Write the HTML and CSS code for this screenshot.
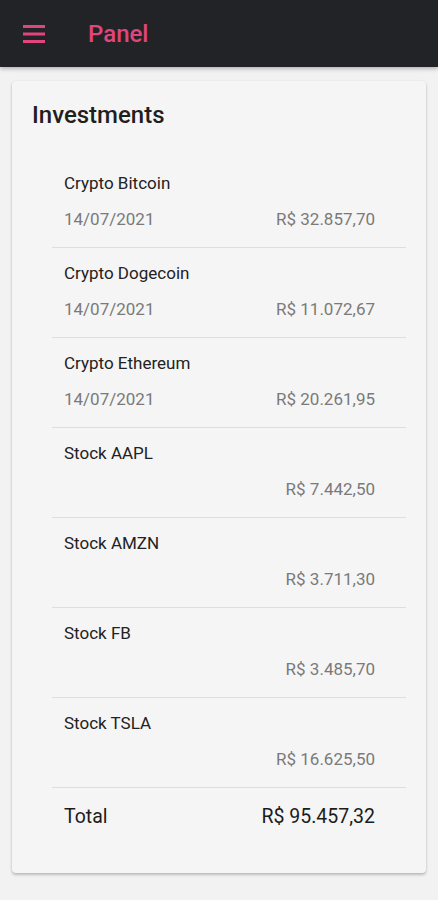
FILE: index.html
```html
<!DOCTYPE html>
<html lang="pt-BR">
<head>
<meta charset="utf-8">
<title>Panel</title>
<link rel="stylesheet" href="styles.css">
</head>
<body>
<header class="topbar">
  <button class="menu-btn" aria-label="Menu">
    <svg width="22" height="18" viewBox="0 0 22 18"><rect x="0" y="0" width="22" height="3" fill="#e0457b"/><rect x="0" y="7.5" width="22" height="3" fill="#e0457b"/><rect x="0" y="15" width="22" height="3" fill="#e0457b"/></svg>
  </button>
  <h1 class="title">Panel</h1>
</header>
<main class="content">
  <section class="card">
    <h2 class="card-title">Investments</h2>
    <ul class="list">
      <li class="item">
        <div class="name">Crypto Bitcoin</div>
        <div class="meta"><span class="date">14/07/2021</span><span class="amount">R$ 32.857,70</span></div>
      </li>
      <li class="item">
        <div class="name">Crypto Dogecoin</div>
        <div class="meta"><span class="date">14/07/2021</span><span class="amount">R$ 11.072,67</span></div>
      </li>
      <li class="item">
        <div class="name">Crypto Ethereum</div>
        <div class="meta"><span class="date">14/07/2021</span><span class="amount">R$ 20.261,95</span></div>
      </li>
      <li class="item">
        <div class="name">Stock AAPL</div>
        <div class="meta"><span class="date"></span><span class="amount">R$ 7.442,50</span></div>
      </li>
      <li class="item">
        <div class="name">Stock AMZN</div>
        <div class="meta"><span class="date"></span><span class="amount">R$ 3.711,30</span></div>
      </li>
      <li class="item">
        <div class="name">Stock FB</div>
        <div class="meta"><span class="date"></span><span class="amount">R$ 3.485,70</span></div>
      </li>
      <li class="item">
        <div class="name">Stock TSLA</div>
        <div class="meta"><span class="date"></span><span class="amount">R$ 16.625,50</span></div>
      </li>
      <li class="total">
        <span>Total</span><span>R$ 95.457,32</span>
      </li>
    </ul>
  </section>
</main>
</body>
</html>
```
FILE: styles.css
```css
* { box-sizing: border-box; }
html, body {
  margin: 0;
  padding: 0;
  background: #f2f2f2;
  font-family: Roboto, "Noto Sans", "Liberation Sans", sans-serif;
}
.topbar {
  height: 67px;
  background: #212327;
  display: flex;
  align-items: center;
  padding-left: 23px;
  box-shadow: 0 2px 4px rgba(0,0,0,0.25);
  position: relative;
  z-index: 1;
}
.menu-btn {
  border: 0;
  background: none;
  padding: 0;
  width: 22px;
  height: 18px;
  display: flex;
  margin-top: 1px;
}
.menu-btn svg { display: block; width: 22px; height: 18px; }
.title {
  margin: 0 0 0 43px;
  font-size: 24px;
  font-weight: 500;
  color: #e0457b;
  line-height: 28px;
}
.content {
  padding: 14px 12px 28px;
}
.card {
  background: #f5f5f5;
  border-radius: 4px;
  box-shadow: 0 2px 3px rgba(0,0,0,0.22), 0 0 2px rgba(0,0,0,0.08);
  padding: 20px 20px 30px 20px;
  height: 792px;
}
.card-title {
  margin: 0;
  font-size: 24px;
  font-weight: 500;
  color: #1f1f1f;
  line-height: 28px;
}
.list {
  list-style: none;
  margin: 29px 0 0 20px;
  padding: 0;
}
.item {
  height: 90px;
  padding: 13px 31px 0 12px;
  border-bottom: 1px solid #dedede;
}
.name {
  font-size: 17px;
  line-height: 24px;
  color: #222;
}
.meta {
  margin-top: 12px;
  display: flex;
  justify-content: space-between;
  font-size: 17px;
  line-height: 24px;
  color: #7a7a7a;
}
.total {
  display: flex;
  justify-content: space-between;
  padding: 16px 31px 0 12px;
  font-size: 19.5px;
  line-height: 26px;
  color: #1c1c1c;
}
```
